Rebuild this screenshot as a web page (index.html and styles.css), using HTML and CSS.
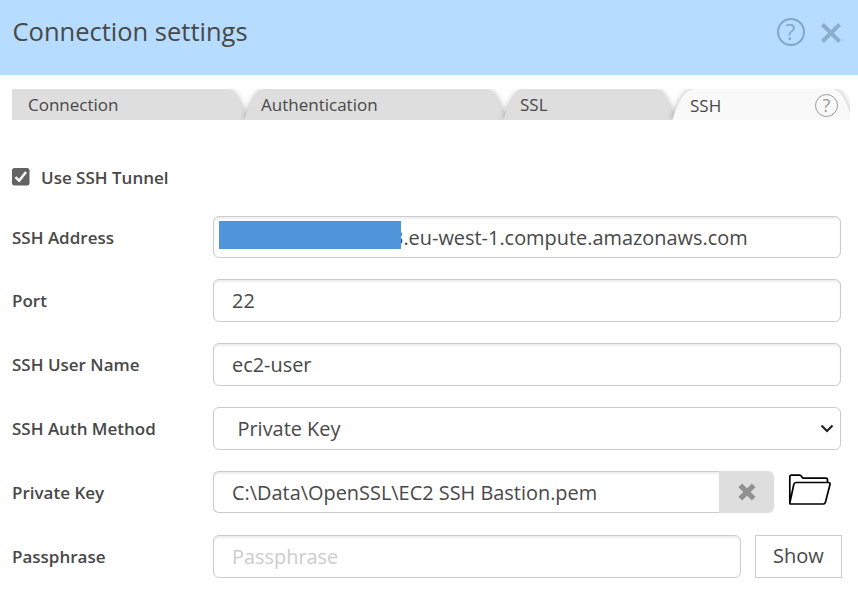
FILE: index.html
```html
<!DOCTYPE html>
<html lang="en">
<head>
<meta charset="utf-8">
<title>Connection settings</title>
<link rel="stylesheet" href="styles.css">
</head>
<body>
<header class="header">
  <h1><span>Connection settings</span></h1>
  <div class="actions">
    <span class="help">?</span>
    <svg class="close" width="22" height="22" viewBox="0 0 22 22"><path d="M2.5 2.500 19.500 19.500M19.500 2.500 2.500 19.500"/></svg>
  </div>
</header>
<nav class="tabs">
  <svg class="tab-shapes" width="838" height="31" viewBox="0 0 838 31">
    <path d="M0 0H213C224 0 229 14 235 31H0Z"/>
    <path d="M232.500 31C237 16 243 0 256 0H472C483 0 488 14 494 31Z"/>
    <path d="M491.500 31C496 16 502 0 515 0H641C652 0 657 14 663 31Z"/>
    <path class="active" d="M660.500 31C665 16 671 0 684 0H820C831 0 836 18 841 31Z"/>
  </svg>
  <a class="tab tab-connection">Connection</a>
  <a class="tab tab-auth">Authentication</a>
  <a class="tab tab-ssl">SSL</a>
  <a class="tab tab-ssh">SSH <span class="help small">?</span></a>
</nav>
<main class="form">
  <label class="check">
    <svg width="18" height="18" viewBox="0 0 18 18"><rect width="17.500" height="17.500" rx="2.500" fill="#636363"/><path d="M3.500 9.200 7.200 12.700 14 4" fill="none" stroke="#fff" stroke-width="2.500"/></svg>
    <span>Use SSH Tunnel</span>
  </label>
  <div class="row"><span class="label">SSH Address</span><div class="field address"><span class="mask"></span><span class="host">3.eu-west-1.compute.amazonaws.com</span></div></div>
  <div class="row"><span class="label">Port</span><div class="field"><span>22</span></div></div>
  <div class="row"><span class="label">SSH User Name</span><div class="field"><span>ec2-user</span></div></div>
  <div class="row"><span class="label">SSH Auth Method</span><div class="field select"><span>Private Key</span><svg width="14" height="9" viewBox="0 0 14 9"><path d="M1.500 1.500 7 7 12.500 1.500"/></svg></div></div>
  <div class="row"><span class="label">Private Key</span>
    <div class="field file"><span>C:\Data\OpenSSL\EC2 SSH Bastion.pem</span></div>
    <div class="clear"><svg width="20" height="20" viewBox="0 0 18 18"><path d="M3 3 15 15M15 3 3 15"/></svg></div>
    <svg class="folder" width="44" height="32" viewBox="0 0 44 32"><path d="M1.800 29V3Q1.800 1.200 3.500 1.200H11.500Q13 1.200 13.500 2.500L15 4.200H38Q39.500 4.200 39.500 6V8.500M1.800 29 5.800 10.500Q6.200 8.500 8 8.500H40.500Q42.500 8.500 42 10.500L37.500 28Q37 30 35.500 30H3Q1.500 30 1.800 29Z"/></svg>
  </div>
  <div class="row"><span class="label">Passphrase</span><div class="field pass"><span>Passphrase</span></div><button class="show"><span>Show</span></button></div>
</main>
</body>
</html>
```

FILE: styles.css
```css
* { box-sizing: border-box; }
body { margin: 0; width: 858px; height: 591px; overflow: hidden; background: #fff; color: #484848; font-family: "Open Sans", sans-serif; }
.header { height: 74.500px; padding: 0 16.500px 0 12.500px; background: #b6dcff; display: flex; justify-content: space-between; }
h1 { margin: 12px 0 0; font-size: 25.500px; line-height: 38px; font-weight: 400; }
.actions { display: flex; align-items: flex-start; padding-top: 18px; gap: 15px; }
.help { width: 28px; height: 28px; border: 2px solid #84a6c5; border-radius: 50%; color: #84a6c5; font-size: 22px; line-height: 23px; text-align: center; }
.close { margin-top: 4px; fill: none; stroke: #8caecb; stroke-width: 4; }
.tabs { position: relative; display: grid; grid-template-columns: 233px 259px 170px 176px; width: 838px; height: 31px; margin: 14.500px 0 0 12px; font-size: 17px; line-height: 31px; }
.tab-shapes { position: absolute; inset: 0; fill: #dedede; z-index: -1; }
.tab-shapes path { filter: drop-shadow(0 0 3px rgba(0,0,0,.3)); }
.tab-shapes .active { fill: #f9f9f9; }
.tab { padding-left: 16px; }
.tab-ssh { padding: 1px 12px 0 16px; display: flex; justify-content: space-between; align-items: center; }
.small { width: 23px; height: 23px; border: 1.500px solid #9b9b9b; color: #9b9b9b; font-size: 18px; line-height: 20px; }
.form { padding: 45px 0 0 12px; }
.check { height: 24px; display: flex; align-items: center; gap: 11px; font-size: 17px; font-weight: 600; margin-bottom: 26.500px; }
.row { display: flex; height: 43px; margin-bottom: 20.900px; align-items: center; }
.label { width: 201px; font-size: 17px; font-weight: 600; }
.field { width: 628px; height: 43px; border: 1.500px solid #ccc; border-radius: 6px; box-shadow: inset 0 2px 2px rgba(0,0,0,.07); padding-left: 18px; display: flex; align-items: center; font-size: 19.920px; white-space: nowrap; }
.address { height: 42px; padding-left: 5px; }
.mask { position: relative; width: 182px; height: 28px; margin: 0 -9px 4px 0; background: #5094da; }
.select { padding: 0 6px 0 23.500px; justify-content: space-between; box-shadow: none; }
.select svg { fill: none; stroke: #222; stroke-width: 2.200; }
.file { width: 506px; height: 42px; margin-bottom: 1px; border-radius: 6px 0 0 6px; border-right: 0; }
.clear { width: 55px; height: 42px; margin-bottom: 1px; background: #dedede; border-radius: 0 6px 6px 0; display: grid; place-items: center; }
.clear svg { fill: none; stroke: #919191; stroke-width: 4.600; }
.folder { margin: -6px 0 0 14px; fill: none; stroke: #000; stroke-width: 1.700; }
.pass { width: 528px; color: #ccc; }
.show { width: 87px; height: 43px; margin-left: 14px; padding: 0 0 2px; background: #fff; border: 1.500px solid #ccc; color: #484848; font: 20px "Open Sans", sans-serif; }
```
